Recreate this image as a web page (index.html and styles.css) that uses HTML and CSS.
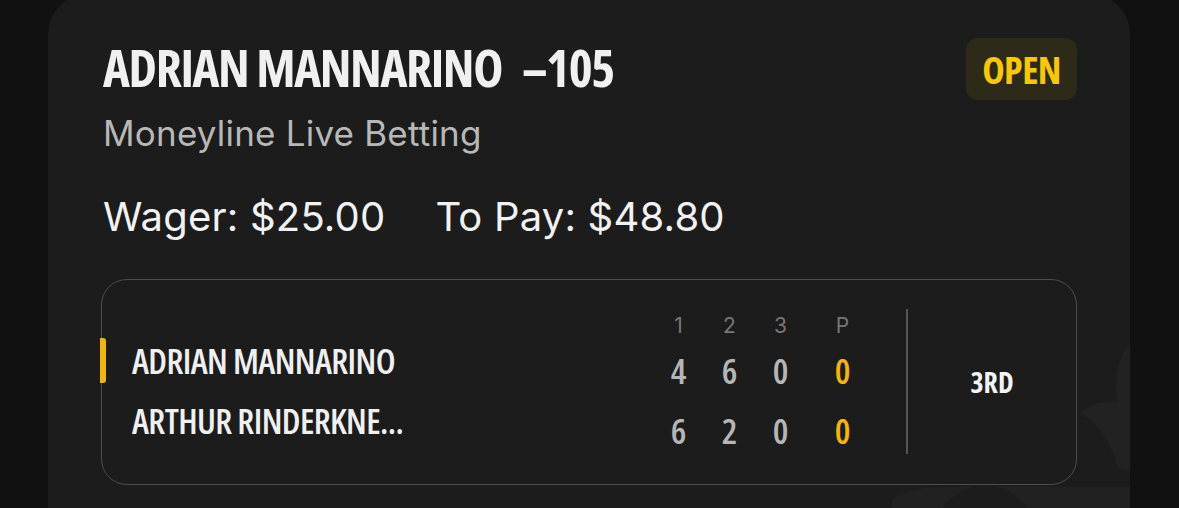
FILE: index.html
```html
<!DOCTYPE html>
<html lang="en">
<head>
<meta charset="utf-8">
<title>Bet slip</title>
<link rel="stylesheet" href="styles.css">
</head>
<body>
<main class="page">
  <article class="card">
    <svg class="card-mark" width="1082" height="560" viewBox="48 -6 1082 560" aria-hidden="true">
      <path d="M1130 345 C1118 355 1114 380 1117 402 C1102 400 1088 406 1080 414 C1098 422 1110 440 1118 468 L1130 470 Z" fill="#222222"/>
      <path d="M892 560 L892 500 C902 489 930 486 960 487 L1130 487 L1130 560 Z" fill="#212121"/>
      <circle cx="985" cy="538" r="52" fill="#1c1c1c"/>
    </svg>

    <header class="card-head">
      <div class="bet-title">
        <h1 class="selection">ADRIAN MANNARINO <span class="odds">–105</span></h1>
        <p class="market">Moneyline Live Betting</p>
      </div>
      <span class="status">OPEN</span>
    </header>

    <p class="amounts">
      <span>Wager: $25.00</span>
      <span>To Pay: $48.80</span>
    </p>

    <section class="scoreboard">
      <div class="players">
        <div class="player is-picked">ADRIAN MANNARINO</div>
        <div class="player">ARTHUR RINDERKNE...</div>
      </div>

      <div class="sets">
        <div class="set-row set-head">
          <span>1</span><span>2</span><span>3</span><span>P</span>
        </div>
        <div class="set-row">
          <span>4</span><span>6</span><span>0</span><span class="pts">0</span>
        </div>
        <div class="set-row">
          <span>6</span><span>2</span><span>0</span><span class="pts">0</span>
        </div>
      </div>

      <div class="divider"></div>

      <div class="period">3RD</div>
    </section>
  </article>
</main>
</body>
</html>
```

FILE: styles.css
```css
* {
  box-sizing: border-box;
}

html,
body {
  margin: 0;
  height: 100%;
  background: #111111;
  overflow: hidden;
}

.page {
  padding: 0 49px 0 48px;
}

.card {
  position: relative;
  margin-top: -6px;
  min-height: 560px;
  padding: 44px 53px 0 55px;
  background: #1c1c1c;
  border-radius: 40px;
  overflow: hidden;
}

.card-mark {
  position: absolute;
  left: 0;
  top: 0;
}

.card-head,
.amounts,
.scoreboard {
  position: relative;
}

/* condensed display face used for names, odds and scores */
.selection,
.status,
.player,
.set-row,
.period {
  font-family: "Open Sans", "DejaVu Sans", sans-serif;
  font-stretch: 75%;
  font-weight: 700;
}

.card-head {
  display: flex;
  justify-content: space-between;
  align-items: flex-start;
}

.selection {
  margin: 3px 0 0;
  font-size: 51px;
  line-height: 52px;
  color: #f0f0f0;
  letter-spacing: -1.35px;
  white-space: pre;
}

.odds {
  margin-left: 12px;
}

.market {
  margin: 20px 0 0;
  font-family: "Inter", "Noto Sans", sans-serif;
  font-size: 35px;
  line-height: 40px;
  letter-spacing: 0.2px;
  color: #b8b8b8;
}

.status {
  display: flex;
  align-items: center;
  justify-content: center;
  width: 111px;
  height: 62px;
  border-radius: 12px;
  background: #2e2a1a;
  color: #f6c900;
  font-size: 38px;
  letter-spacing: -0.6px;
  line-height: 1;
}

.amounts {
  display: flex;
  gap: 50px;
  margin: 40px 0 0;
  font-family: "Inter", "Noto Sans", sans-serif;
  font-size: 40px;
  line-height: 48px;
  letter-spacing: 0.2px;
  color: #f2f2f2;
}

.scoreboard {
  display: flex;
  align-items: center;
  height: 206px;
  margin: 38px 0 0 -2px;
  padding-left: 30px;
  border: 1.5px solid #4d4d4d;
  border-radius: 26px;
}

.players {
  flex: 1;
  padding-top: 17px;
}

.player {
  position: relative;
  font-size: 35px;
  font-weight: 600;
  line-height: 60px;
  letter-spacing: -0.6px;
  color: #f0f0f0;
}

.player.is-picked::before {
  content: "";
  position: absolute;
  left: -32px;
  top: 7px;
  width: 6px;
  height: 45px;
  border-radius: 0 3px 3px 0;
  background: #f2b705;
}

.sets {
  margin-top: 7px;
}

.set-row {
  display: grid;
  grid-template-columns: 51px 51px 51px 73px;
  justify-items: center;
  font-size: 35px;
  font-weight: 600;
  line-height: 60px;
  color: #b6b6b6;
}

.set-row.set-head {
  font-family: "Inter", "Noto Sans", sans-serif;
  font-stretch: normal;
  font-weight: 400;
  font-size: 21px;
  line-height: 30px;
  color: #777777;
}

.set-row .pts {
  color: #f2b705;
}

.divider {
  align-self: stretch;
  width: 2px;
  margin: 29px 0 30px 27px;
  background: #555555;
}

.period {
  flex: 0 0 168px;
  text-align: center;
  font-size: 28px;
  line-height: 1;
  color: #f4f4f4;
}
```
